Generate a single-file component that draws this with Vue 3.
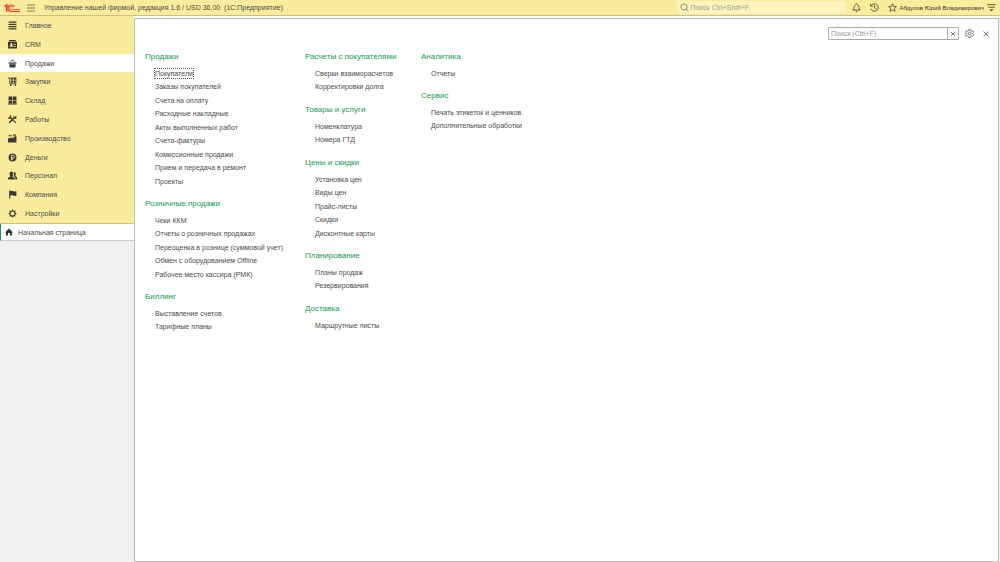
<script setup>
import { ref } from 'vue'

const globalQuery = ref('')
const panelQuery = ref('')

const sections = [
  { id: 'main', label: 'Главное' },
  { id: 'crm', label: 'CRM' },
  { id: 'sales', label: 'Продажи', active: true },
  { id: 'purchases', label: 'Закупки' },
  { id: 'stock', label: 'Склад' },
  { id: 'works', label: 'Работы' },
  { id: 'production', label: 'Производство' },
  { id: 'money', label: 'Деньги' },
  { id: 'staff', label: 'Персонал' },
  { id: 'company', label: 'Компания' },
  { id: 'settings', label: 'Настройки' }
]

const columns = [
  [
    {
      title: 'Продажи',
      items: ['Покупатели', 'Заказы покупателей', 'Счета на оплату', 'Расходные накладные', 'Акты выполненных работ', 'Счета-фактуры', 'Комиссионные продажи', 'Прием и передача в ремонт', 'Проекты']
    },
    {
      title: 'Розничные продажи',
      items: ['Чеки ККМ', 'Отчеты о розничных продажах', 'Переоценка в рознице (суммовой учет)', 'Обмен с оборудованием Offline', 'Рабочее место кассира (РМК)']
    },
    { title: 'Биллинг', items: ['Выставление счетов', 'Тарифные планы'] }
  ],
  [
    { title: 'Расчеты с покупателями', items: ['Сверки взаиморасчетов', 'Корректировки долга'] },
    { title: 'Товары и услуги', items: ['Номенклатура', 'Номера ГТД'] },
    { title: 'Цены и скидки', items: ['Установка цен', 'Виды цен', 'Прайс-листы', 'Скидки', 'Дисконтные карты'] },
    { title: 'Планирование', items: ['Планы продаж', 'Резервирования'] },
    { title: 'Доставка', items: ['Маршрутные листы'] }
  ],
  [
    { title: 'Аналитика', items: ['Отчеты'] },
    { title: 'Сервис', items: ['Печать этикеток и ценников', 'Дополнительные обработки'] }
  ]
]

const focused = 'Покупатели'
</script>

<template>
  <div class="app">
    <header class="topbar">
      <svg class="logo" viewBox="0 0 30 18" aria-label="1С" role="img">
        <g fill="none" stroke="#e0392f">
          <path d="M1 6.500 5 3.500V16" stroke-width="3" />
          <path d="M19 7A6 6 0 1 0 14 15.500H30" stroke-width="2.200" />
          <path d="M16 8A2.800 2.800 0 1 0 14 12H30" stroke-width="1.600" />
        </g>
      </svg>
      <button class="icon-btn menu" aria-label="Меню">
        <svg viewBox="0 0 16 16"><path d="M0 2H16M0 8H16M0 14H16" fill="none" stroke="#55513f" stroke-width="1.500" /></svg>
      </button>
      <h1 class="title">Управление нашей фирмой, редакция 1.6 / USD 36,00&nbsp; (1С:Предприятие)</h1>
      <label class="global-search">
        <svg viewBox="0 0 16 16"><g fill="none" stroke="#77705a" stroke-width="1.400"><circle cx="7" cy="7" r="5.500" /><path d="m11 11 4 4" /></g></svg>
        <input v-model="globalQuery" type="text" placeholder="Поиск Ctrl+Shift+F" aria-label="Поиск Ctrl+Shift+F" />
      </label>
      <div class="tools">
        <button class="icon-btn" aria-label="Уведомления">
          <svg viewBox="0 0 16 16"><path d="M1.500 12.500C4 10.500 3 6 5 4 6 3 6.500 3 8 1.500 9.500 3 10 3 11 4c2 2 1 6.500 3.500 8.500Z" fill="none" stroke="#45412f" stroke-width="1.500" /><path d="M6 14h4l-2 2Z" fill="#45412f" /></svg>
        </button>
        <button class="icon-btn" aria-label="История">
          <svg viewBox="0 0 16 16"><g fill="none" stroke="#45412f" stroke-width="1.500"><path d="M2 5a6.600 6.600 0 1 1-.5 5M8 4v4.500l3.500 2" /><path d="M1 1.500V5.500H5" /></g></svg>
        </button>
        <button class="icon-btn" aria-label="Избранное">
          <svg viewBox="0 0 16 16"><path d="m8 1.300 2 4.700 5 .4-3.800 3.300 1.200 5L8 12l-4.400 2.700 1.200-5L1 6.400 6 6Z" fill="none" stroke="#45412f" stroke-width="1.400" /></svg>
        </button>
      </div>
      <button class="user">Абдулов Юрий Владимирович</button>
      <button class="icon-btn more" aria-label="Сервис и настройки">
        <svg viewBox="0 0 16 16"><path d="M0 3H16M2 7.500H14" fill="none" stroke="#45412f" stroke-width="1.500" /><path d="M4.500 11h7L8 14.500Z" fill="#45412f" /></svg>
      </button>
    </header>

    <div class="body">
      <aside class="sidebar">
        <nav class="sections">
          <a v-for="s in sections" :key="s.id" href="#" class="section" :class="{ active: s.active }">
            <svg viewBox="0 0 16 16" fill="#3d3a35">
              <path v-if="s.id === 'main'" d="M1 1h14v2H1ZM1 5h14v2H1ZM1 9h14v2H1ZM1 13h14v2H1Z" />
              <path v-else-if="s.id === 'crm'" fill-rule="evenodd" d="M2 0h12v2H2ZM0 3h16v12H0ZM3 12h6v-2l-2-1a1.800 1.800 0 1 0-2 0l-2 1ZM10 7h4v1.500h-4ZM10 10.500h4V12h-4Z" />
              <g v-else-if="s.id === 'sales'">
                <path d="M1 6h14v2.500H1ZM2 9.500h12L13 15H3Z" />
                <path d="m4 6 3-4h2l3 4" fill="none" stroke="#3d3a35" stroke-width="1.500" />
              </g>
              <g v-else-if="s.id === 'purchases'">
                <path d="M5 1h4.500v4H5ZM10.500 1H15v4h-4.500ZM5 6h4.500v4H5ZM10.500 6H15v4h-4.500Z" />
                <path d="M0 1.500h3V12h12" fill="none" stroke="#3d3a35" stroke-width="1.500" />
                <circle cx="5" cy="14.500" r="1.500" /><circle cx="13" cy="14.500" r="1.500" />
              </g>
              <path v-else-if="s.id === 'stock'" d="M1 1h6.500v6H1ZM8.500 1H15v6H8.500ZM1 8h6.500v5H1ZM8.500 8H15v5H8.500ZM0 13.500h16V15H0Z" />
              <g v-else-if="s.id === 'works'" fill="none" stroke="#3d3a35">
                <path d="m3 3 11 11" stroke-width="2.200" /><path d="m2 14 9-9" stroke-width="2.600" />
                <path d="M0 5c2 2 5 1 5-1S4 1 3 1M10 2l1 3.500 4 .5M15 2l-3 3" stroke-width="2" />
              </g>
              <path v-else-if="s.id === 'production'" d="M0 15V8l5-2v2l5-3v3h1V4h4v11ZM1 2h6v2H1ZM9 1h5v2H9Z" />
              <g v-else-if="s.id === 'money'">
                <circle cx="8" cy="8" r="7" />
                <path d="M6.500 13V4H9a2.500 2.500 0 0 1 0 5H5M5 11h4" fill="none" stroke="#faec9d" stroke-width="1.500" />
              </g>
              <g v-else-if="s.id === 'staff'">
                <path d="M0 15v-3l4-2C2 7 2 1 6 1s4 6 2 9l4 2v3Z" />
                <path d="M10 2c4-1 5 4 3 7l3 2v4h-3v-4l-3-1.500c1-2 1.500-5 0-7.500Z" />
              </g>
              <path v-else-if="s.id === 'company'" d="M2 1h2v1c4-2 5 2 11 0v8c-5 2-7-2-11 0v5H2Z" />
              <g v-else fill="none" stroke="#3d3a35">
                <circle cx="8" cy="8" r="4.500" stroke-width="2" />
                <path d="M8 1v2.500M8 12.500V15M1 8h2.500M12.500 8H15M3 3l2 2M11 11l2 2M3 13l2-2M11 5l2-2" stroke-width="2" />
              </g>
            </svg>
            <span>{{ s.label }}</span>
          </a>
        </nav>
        <a href="#" class="home">
          <svg viewBox="0 0 16 16"><path d="M8 1 0 9h2v6h4v-5h4v5h4V9h2Z" fill="#333" /></svg>
          <span>Начальная страница</span>
        </a>
      </aside>

      <main class="panel">
        <div class="panel-tools">
          <div class="panel-search">
            <input v-model="panelQuery" type="text" placeholder="Поиск (Ctrl+F)" aria-label="Поиск (Ctrl+F)" />
            <button aria-label="Очистить" @click="panelQuery = ''">
              <svg viewBox="0 0 8 8"><path d="m2 2 4 4M6 2 2 6" stroke="#777" stroke-width="1" /></svg>
            </button>
          </div>
          <button class="icon-btn gear" aria-label="Настройка">
            <svg viewBox="0 0 20 20"><g fill="none" stroke="#555" stroke-width="1.700"><path d="M8 1h4l.6 2.700 2 1.100 2.600-.9 2 3.500L17.200 9v2l2 1.700-2 3.500-2.600-.9-2 1.100L12 19H8l-.6-2.600-2-1.100-2.600.9-2-3.500L2.800 11V9L.8 7.400l2-3.500 2.600.9 2-1.100Z" /><circle cx="10" cy="10" r="3.300" /></g></svg>
          </button>
          <button class="icon-btn close" aria-label="Закрыть">
            <svg viewBox="0 0 12 12"><path d="m1 1 10 10M11 1 1 11" stroke="#555" stroke-width="1.600" /></svg>
          </button>
        </div>

        <div class="columns">
          <div v-for="(groups, i) in columns" :key="i" class="column">
            <section v-for="g in groups" :key="g.title" class="group">
              <h2>{{ g.title }}</h2>
              <ul>
                <li v-for="item in g.items" :key="item">
                  <a href="#" :class="{ focused: item === focused }">{{ item }}</a>
                </li>
              </ul>
            </section>
          </div>
        </div>
      </main>
    </div>
  </div>
</template>

<style>
body {
  background: #f0f0f0;
}
</style>

<style scoped>
.app {
  display: flex;
  flex-direction: column;
  min-height: 100vh;
  font-family: "Liberation Sans", Arial, sans-serif;
  font-size: 7px;
  color: #4a4a4a;
}
.app * {
  box-sizing: border-box;
}
a {
  color: inherit;
  text-decoration: none;
}
button,
input {
  margin: 0;
  padding: 0;
  border: 0;
  background: none;
  font: inherit;
  color: inherit;
}
svg {
  display: block;
  flex: none;
}
.topbar {
  display: flex;
  align-items: center;
  height: 16px;
  padding: 0 4px;
  background: #faec9d;
  border-bottom: 1px solid #cdbf7c;
}
.logo {
  width: 16px;
  height: 10px;
}
.icon-btn {
  display: flex;
  flex: none;
}
.icon-btn svg {
  width: 9px;
  height: 9px;
}
.menu {
  margin-left: 7px;
}
.menu svg {
  width: 8px;
  height: 8px;
}
.title {
  flex: 1;
  margin: 0 0 0 9px;
  font-size: 7px;
  font-weight: 400;
  white-space: nowrap;
}
.global-search {
  display: flex;
  align-items: center;
  gap: 1px;
  width: 168px;
  height: 13px;
  padding-left: 2px;
  background: #fdf4bd;
}
.global-search svg {
  width: 9px;
  height: 9px;
}
.global-search input {
  flex: 1;
  min-width: 0;
  outline: 0;
}
input::placeholder {
  color: #999;
  opacity: 1;
}
.tools {
  display: flex;
  gap: 9px;
  margin-left: 6px;
}
.user {
  margin-left: 2px;
  font-size: 6px;
  color: #333;
  white-space: nowrap;
}
.more {
  margin-left: 3px;
}
.body {
  display: flex;
  flex: 1;
}
.sidebar {
  width: 134px;
  flex: none;
}
.sections {
  display: grid;
  grid-template-rows: repeat(11, 1fr);
  height: 208px;
  background: #faec9d;
  border-bottom: 1px solid #cdbf7c;
}
.section {
  display: flex;
  align-items: center;
  gap: 8px;
  padding-left: 8px;
}
.section.active {
  background: #fff;
}
.section svg {
  width: 9px;
  height: 9px;
}
.home {
  display: flex;
  align-items: center;
  gap: 5px;
  height: 17px;
  padding-left: 4px;
  background: #fff;
  border-left: 1px solid #119a50;
  border-bottom: 1px solid #ccc;
}
.home svg {
  width: 8px;
  height: 8px;
}
.panel {
  flex: 1;
  margin: 2px 1px 0 0;
  background: #fff;
  border: 1px solid #bbb;
  box-shadow: 0 -2px #fff;
}
.panel-tools {
  display: flex;
  align-items: center;
  justify-content: flex-end;
  height: 13px;
  margin: 8px 9px 0 0;
}
.panel-search {
  display: flex;
  width: 131px;
  height: 13px;
  border: 1px solid #aaa;
  border-radius: 1px;
}
.panel-search input {
  flex: 1;
  min-width: 0;
  padding-left: 2px;
  outline: 0;
}
.panel-search button {
  display: flex;
  align-items: center;
  justify-content: center;
  width: 11px;
  border-left: 1px solid #aaa;
}
.panel-search svg {
  width: 8px;
  height: 8px;
}
.gear {
  margin-left: 6px;
}
.close {
  margin-left: 9px;
}
.close svg {
  width: 6px;
  height: 6px;
}
.columns {
  display: grid;
  grid-template-columns: 160px 116px auto;
  margin: 8px 0 0 10px;
}
.group {
  margin-bottom: 7px;
}
h2 {
  margin: 0 0 1px;
  font-size: 8px;
  font-weight: 400;
  line-height: 18px;
  color: #119a50;
  white-space: nowrap;
}
ul {
  margin: 0;
  padding: 0 0 0 10px;
  list-style: none;
}
li {
  height: 13px;
  line-height: 13px;
  white-space: nowrap;
}
li:nth-child(even) {
  height: 14px;
  line-height: 14px;
}
.focused {
  padding: 1px 0;
  outline: 1px dotted #555;
}
</style>
